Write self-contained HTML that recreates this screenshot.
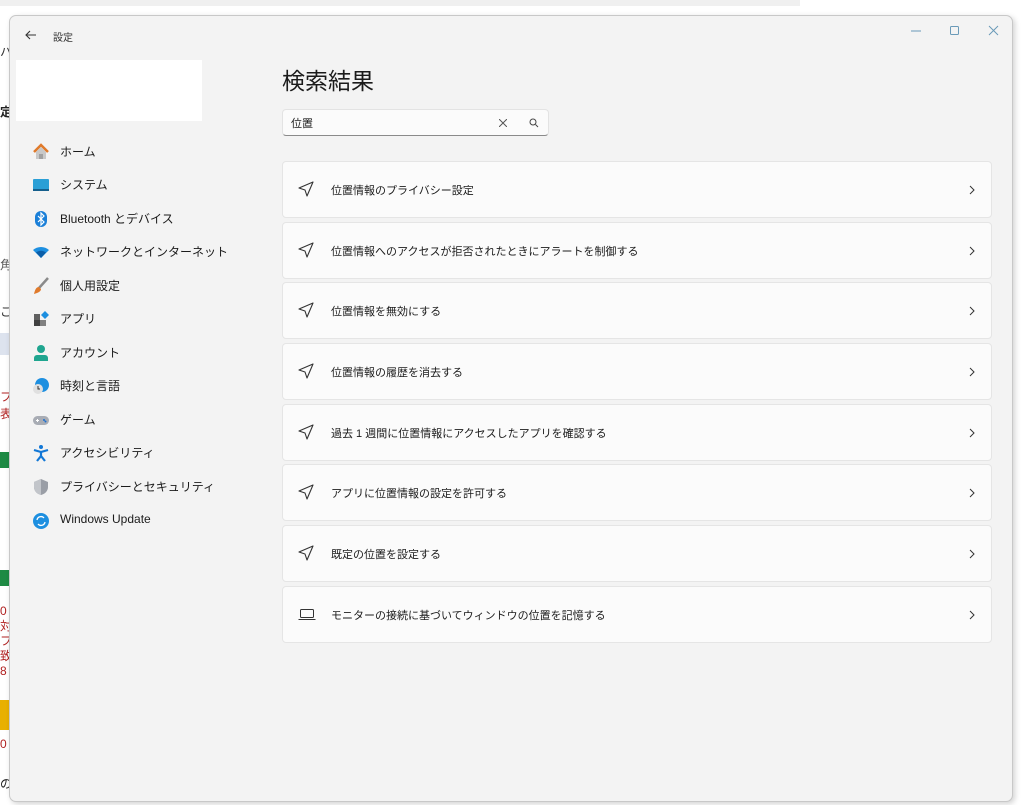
<!DOCTYPE html>
<html><head><meta charset="utf-8"><style>
body{margin:0;width:1024px;height:805px;background:#fff;position:relative;overflow:hidden;font-family:"Liberation Sans","Noto Sans CJK JP",sans-serif;}
.win{position:absolute;left:9px;top:15px;width:1002px;height:785px;background:#f3f3f3;border:1px solid #c8c8c8;border-radius:7px;box-shadow:2px 2px 6px rgba(0,0,0,.18);}
.t{position:absolute;font-size:12px;color:#1b1b1b;white-space:nowrap;}
.nav{position:absolute;left:22px;font-size:12px;color:#1b1b1b;}
.nav .ic{position:absolute;left:0;top:-9px;width:18px;height:18px;}
.nav span{position:absolute;left:28px;top:-9px;white-space:nowrap;}
.card{position:absolute;left:272px;width:708px;height:55px;background:#fbfbfb;border:1px solid #e5e5e5;border-radius:4px;}
.card .tx{position:absolute;left:48px;top:20px;font-size:11px;color:#1b1b1b;white-space:nowrap;}
.card svg.a{position:absolute;left:15px;top:19px;}
.card svg.c{position:absolute;right:16px;top:23px;}
.lb{position:absolute;left:0;font-size:12px;color:#b02020;}
</style></head><body>
<div style="position:absolute;left:0;top:0;width:800px;height:6px;background:#f0f0f0"></div>
<div class="lb" style="top:43px;color:#333">ハ</div>
<div class="lb" style="top:103px;color:#222;font-weight:bold">定</div>
<div class="lb" style="top:256px;color:#555">角</div>
<div class="lb" style="top:303px;color:#333">こ</div>
<div style="position:absolute;left:0;top:333px;width:10px;height:22px;background:#dde3ee"></div>
<div class="lb" style="top:388px">フ<br>表</div>
<div style="position:absolute;left:0;top:452px;width:10px;height:16px;background:#1e8a44"></div>
<div style="position:absolute;left:0;top:570px;width:10px;height:16px;background:#1e8a44"></div>
<div class="lb" style="top:604px;line-height:15px">0<br>対<br>フ<br>致<br>8</div>
<div style="position:absolute;left:0;top:700px;width:10px;height:30px;background:#e8b000"></div>
<div class="lb" style="top:737px">0</div>
<div class="lb" style="top:775px;color:#222">の</div>

<div class="win">
  <svg style="position:absolute;left:15px;top:14px" width="12" height="10" viewBox="0 0 12 10"><path d="M11 5H1M5 1L1 5l4 4" stroke="#333" fill="none" stroke-width="1.1"/></svg>
  <div class="t" style="left:43px;top:13px;font-size:10px;color:#333">設定</div>
  <svg style="position:absolute;left:901px;top:9px" width="90" height="12"><path d="M0 6h10" stroke="#6a9ab8"/><rect x="39.5" y="1.5" width="8" height="8" rx="1" fill="none" stroke="#6a9ab8"/><path d="M78 1l9 9M87 1l-9 9" stroke="#6a9ab8"/></svg>
  <div style="position:absolute;left:6px;top:44px;width:186px;height:61px;background:#fff"></div>

  <div class="nav" style="top:136px"><svg class="ic" viewBox="0 0 18 18"><path d="M2 9L9 2l7 7" stroke="#e07a2b" stroke-width="2.5" fill="none"/><path d="M4 9v7h10V9L9 4z" fill="#c8c8c8"/><rect x="7" y="11" width="4" height="5" fill="#a0a0a0"/></svg><span>ホーム</span></div>
  <div class="nav" style="top:169px"><svg class="ic" viewBox="0 0 18 18"><rect x="1" y="3" width="16" height="12" rx="1" fill="#2a9fd6"/><rect x="1" y="13" width="16" height="2" fill="#155f8c"/></svg><span>システム</span></div>
  <div class="nav" style="top:203px"><svg class="ic" viewBox="0 0 18 18"><rect x="3" y="1" width="12" height="16" rx="6" fill="#1a7fd8"/><path d="M6 6l6 6-3 3V3l3 3-6 6" stroke="#fff" fill="none" stroke-width="1.2"/></svg><span>Bluetooth とデバイス</span></div>
  <div class="nav" style="top:236px"><svg class="ic" viewBox="0 0 18 18"><path d="M1 7a12 12 0 0116 0L9 15z" fill="#1d8fe0"/><path d="M4 9.5a8 8 0 0110 0L9 15z" fill="#0b5ea8"/></svg><span>ネットワークとインターネット</span></div>
  <div class="nav" style="top:270px"><svg class="ic" viewBox="0 0 18 18"><path d="M16 1L7 11" stroke="#8a8a8a" stroke-width="2.5"/><path d="M7 10c-3 0-4 3-5 7 3-1 7-2 7-5z" fill="#e07a2b"/></svg><span>個人用設定</span></div>
  <div class="nav" style="top:303px"><svg class="ic" viewBox="0 0 18 18"><rect x="2" y="4" width="6" height="6" fill="#606060"/><rect x="2" y="10" width="6" height="6" fill="#404040"/><rect x="8" y="10" width="6" height="6" fill="#808080"/><path d="M13 1l4 4-4 4-4-4z" fill="#1d8fe0"/></svg><span>アプリ</span></div>
  <div class="nav" style="top:337px"><svg class="ic" viewBox="0 0 18 18"><circle cx="9" cy="5" r="4" fill="#1fa58f"/><path d="M2 17v-3a3 3 0 013-3h8a3 3 0 013 3v3z" fill="#1fa58f"/></svg><span>アカウント</span></div>
  <div class="nav" style="top:370px"><svg class="ic" viewBox="0 0 18 18"><circle cx="10" cy="8" r="7" fill="#1d8fe0"/><circle cx="6" cy="12" r="5" fill="#e0e0e0"/><path d="M6 9v3h2" stroke="#333" fill="none"/></svg><span>時刻と言語</span></div>
  <div class="nav" style="top:404px"><svg class="ic" viewBox="0 0 18 18"><rect x="1" y="5" width="16" height="9" rx="4.5" fill="#a8acb4"/><path d="M4 9.5h3M5.5 8v3" stroke="#fff"/><circle cx="12" cy="9" r="1" fill="#1d6fd0"/><circle cx="13.5" cy="10.5" r="1" fill="#1d6fd0"/></svg><span>ゲーム</span></div>
  <div class="nav" style="top:437px"><svg class="ic" viewBox="0 0 18 18"><circle cx="9" cy="3" r="2" fill="#1277d6"/><path d="M2 6l7 2 7-2M9 8v4l-4 5M9 12l4 5" stroke="#1277d6" stroke-width="2.2" fill="none"/></svg><span>アクセシビリティ</span></div>
  <div class="nav" style="top:471px"><svg class="ic" viewBox="0 0 18 18"><path d="M9 1l7 3v5c0 4-3 7-7 8-4-1-7-4-7-8V4z" fill="#9a9ea6"/><path d="M9 1v16c-4-1-7-4-7-8V4z" fill="#c2c5ca"/></svg><span>プライバシーとセキュリティ</span></div>
  <div class="nav" style="top:505px"><svg class="ic" viewBox="0 0 18 18"><circle cx="9" cy="9" r="8" fill="#1d8fe0"/><path d="M5 8a4 4 0 017-2M13 10a4 4 0 01-7 2" stroke="#fff" fill="none" stroke-width="1.3"/></svg><span>Windows Update</span></div>

  <div class="t" style="left:272px;top:46px;font-size:23px;color:#1b1b1b">検索結果</div>
  <div style="position:absolute;left:272px;top:93px;width:265px;height:25px;background:#fbfbfb;border:1px solid #e3e3e3;border-bottom:1px solid #8a8a8a;border-radius:4px;">
    <div class="t" style="left:8px;top:5px;font-size:11px">位置</div>
    <svg style="position:absolute;left:216px;top:9px" width="8" height="8"><path d="M0 0l8 8M8 0L0 8" stroke="#555"/></svg>
    <svg style="position:absolute;left:246px;top:8px" width="10" height="10"><circle cx="4" cy="4" r="3" stroke="#444" fill="none"/><path d="M6.5 6.5L9 9" stroke="#444"/></svg>
  </div>

  <div class="card" style="top:145px"><svg class="a" width="16" height="16" viewBox="0 0 16 16"><path d="M15 1L1 7l6 2 2 6z" fill="none" stroke="#333" stroke-width="1.1" stroke-linejoin="round"/></svg><div class="tx">位置情報のプライバシー設定</div><svg class="c" width="6" height="10"><path d="M1 1l4 4-4 4" stroke="#333" fill="none"/></svg></div>
  <div class="card" style="top:206px"><svg class="a" width="16" height="16" viewBox="0 0 16 16"><path d="M15 1L1 7l6 2 2 6z" fill="none" stroke="#333" stroke-width="1.1" stroke-linejoin="round"/></svg><div class="tx">位置情報へのアクセスが拒否されたときにアラートを制御する</div><svg class="c" width="6" height="10"><path d="M1 1l4 4-4 4" stroke="#333" fill="none"/></svg></div>
  <div class="card" style="top:266px"><svg class="a" width="16" height="16" viewBox="0 0 16 16"><path d="M15 1L1 7l6 2 2 6z" fill="none" stroke="#333" stroke-width="1.1" stroke-linejoin="round"/></svg><div class="tx">位置情報を無効にする</div><svg class="c" width="6" height="10"><path d="M1 1l4 4-4 4" stroke="#333" fill="none"/></svg></div>
  <div class="card" style="top:327px"><svg class="a" width="16" height="16" viewBox="0 0 16 16"><path d="M15 1L1 7l6 2 2 6z" fill="none" stroke="#333" stroke-width="1.1" stroke-linejoin="round"/></svg><div class="tx">位置情報の履歴を消去する</div><svg class="c" width="6" height="10"><path d="M1 1l4 4-4 4" stroke="#333" fill="none"/></svg></div>
  <div class="card" style="top:388px"><svg class="a" width="16" height="16" viewBox="0 0 16 16"><path d="M15 1L1 7l6 2 2 6z" fill="none" stroke="#333" stroke-width="1.1" stroke-linejoin="round"/></svg><div class="tx">過去 1 週間に位置情報にアクセスしたアプリを確認する</div><svg class="c" width="6" height="10"><path d="M1 1l4 4-4 4" stroke="#333" fill="none"/></svg></div>
  <div class="card" style="top:448px"><svg class="a" width="16" height="16" viewBox="0 0 16 16"><path d="M15 1L1 7l6 2 2 6z" fill="none" stroke="#333" stroke-width="1.1" stroke-linejoin="round"/></svg><div class="tx">アプリに位置情報の設定を許可する</div><svg class="c" width="6" height="10"><path d="M1 1l4 4-4 4" stroke="#333" fill="none"/></svg></div>
  <div class="card" style="top:509px"><svg class="a" width="16" height="16" viewBox="0 0 16 16"><path d="M15 1L1 7l6 2 2 6z" fill="none" stroke="#333" stroke-width="1.1" stroke-linejoin="round"/></svg><div class="tx">既定の位置を設定する</div><svg class="c" width="6" height="10"><path d="M1 1l4 4-4 4" stroke="#333" fill="none"/></svg></div>
  <div class="card" style="top:570px"><svg class="a" width="18" height="16" viewBox="0 0 18 16"><rect x="2.5" y="3.5" width="13" height="8" rx="1" fill="none" stroke="#333"/><path d="M0.5 13.5h17" stroke="#333"/></svg><div class="tx">モニターの接続に基づいてウィンドウの位置を記憶する</div><svg class="c" width="6" height="10"><path d="M1 1l4 4-4 4" stroke="#333" fill="none"/></svg></div>
</div>
</body></html>
